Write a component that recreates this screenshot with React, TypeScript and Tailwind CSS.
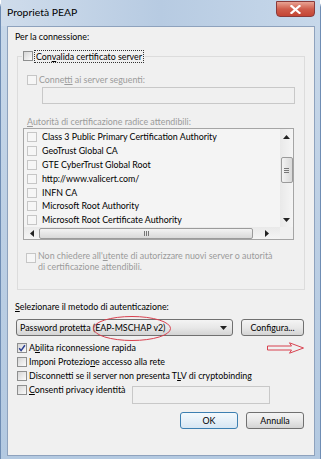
import React from 'react';

const Check = ({ disabled, checked }: { disabled?: boolean; checked?: boolean }) => (
  <span
    className={
      disabled
        ? 'flex h-[10px] w-[10px] shrink-0 items-center justify-center border border-[#c6c6c6] bg-[#f6f6f6]'
        : 'flex h-[10px] w-[10px] shrink-0 items-center justify-center border border-[#8e8f8f] bg-linear-to-br from-[#d6d6d6] to-[#fbfbfb]'
    }
  >
    {checked && (
      <svg width="8" height="8" viewBox="0 0 8 8">
        <path d="M1.2 4.2 L3.1 6.6 L6.9 1.2" fill="none" stroke="#2b3f91" strokeWidth="1.5" />
      </svg>
    )}
  </span>
);

const Tri = ({ dir }: { dir: 'up' | 'down' | 'left' | 'right' }) => {
  const pts = {
    up: '0,4 3.5,0 7,4',
    down: '0,0 7,0 3.5,4',
    left: '4,0 4,7 0,3.5',
    right: '0,0 0,7 4,3.5',
  }[dir];
  const vertical = dir === 'up' || dir === 'down';
  return (
    <svg width={vertical ? 7 : 4} height={vertical ? 4 : 7} viewBox={vertical ? '0 0 7 4' : '0 0 4 7'}>
      <polygon points={pts} fill="#222" />
    </svg>
  );
};

const certs = [
  'Class 3 Public Primary Certification Authority',
  'GeoTrust Global CA',
  'GTE CyberTrust Global Root',
  'http://www.valicert.com/',
  'INFN CA',
  'Microsoft Root Authority',
  'Microsoft Root Certificate Authority',
];

const btn =
  'flex h-[17px] w-[58px] items-center justify-center rounded-[3px] border border-[#707070] bg-linear-to-b from-[#f4f4f4] via-[#e8e8e8] to-[#d4d4d4] text-black';

export default function App() {
  return (
    <div className="h-[459px] w-[321px] bg-white font-['Lato',sans-serif] text-[8.85px] leading-[12px] text-black">
      <div className="flex h-full w-full flex-col rounded-t-[7px] border-x border-[#6f8db4] bg-linear-to-b from-[#c9d9ea] via-[#bccfe4] to-[#b3c9e1]">
        {/* title bar */}
        <div className="flex h-[26px] items-start justify-between bg-linear-to-r from-[#cfdceb] via-[#b7cbe2] to-[#c7d8ea]">
          <span className="pl-[6px] pt-[6px] text-[10.4px] leading-[12px] text-black">Proprietà PEAP</span>
          <div className="mr-[5px] mt-[1px] flex h-[16px] w-[39px] items-center justify-center rounded-b-[4px] border border-[#8a3a3a] bg-linear-to-b from-[#e8a394] via-[#cf5d4c] to-[#c44534]">
            <svg width="11" height="9" viewBox="0 0 11 9">
              <path d="M1.5 1 L9.5 8 M9.5 1 L1.5 8" stroke="#fff" strokeWidth="2.2" strokeLinecap="square" />
            </svg>
          </div>
        </div>

        {/* client area */}
        <div className="relative mb-[3px] ml-[6px] mr-[5px] flex flex-1 flex-col border border-[#8ea2bd] bg-[#f0f0f0] pl-[7px] pt-[4px]">
          <div className="h-[12px]">Per la connessione:</div>

          {/* group box */}
          <div className="relative ml-[2px] mt-[13px] w-[288px] border border-[#dcdcdc] pb-[17px] pl-[9px] pt-[17px]">
            <div className="absolute -top-[8px] left-[4px] flex h-[14px] items-center gap-[1px] bg-[#f0f0f0] pl-[1px] pr-[1px]">
              <Check />
              <span className="border border-dotted border-[#333] px-[1px] leading-[11px]">
                Con<u>v</u>alida certificato server
              </span>
            </div>

            <div className="flex h-[12px] items-center gap-[2px] text-[#9b9b9b]">
              <Check disabled />
              <span>
                Conne<u>t</u>ti ai server seguenti:
              </span>
            </div>
            <div className="ml-[15px] mt-[1px] h-[17px] w-[253px] border border-[#c8c8c8] bg-[#f0f0f0]" />

            <div className="mt-[12px] h-[12px] text-[#9b9b9b]">
              <u>A</u>utorità di certificazione radice attendibili:
            </div>

            {/* list box */}
            <div className="-ml-[4px] grid h-[112px] w-[271px] grid-cols-[1fr_13px] grid-rows-[1fr_12px] border border-[#a5a5a5] bg-[#f4f4f4]">
              <div className="overflow-hidden pl-[3px] pt-[1.5px]">
                {certs.map((c) => (
                  <div key={c} className="flex h-[13.8px] items-center gap-[5px] whitespace-nowrap">
                    <Check disabled />
                    <span>{c}</span>
                  </div>
                ))}
              </div>
              <div className="flex flex-col items-center bg-linear-to-r from-[#e9e9e9] to-[#f5f5f5]">
                <div className="flex h-[16px] items-center">
                  <Tri dir="up" />
                </div>
                <div className="mt-[12px] flex h-[26px] w-[12px] flex-col items-center justify-center gap-[1px] rounded-[2px] border border-[#9b9b9b] bg-linear-to-r from-[#f3f3f3] to-[#d9d9d9]">
                  <span className="h-px w-[5px] bg-[#777]" />
                  <span className="h-px w-[5px] bg-[#777]" />
                  <span className="h-px w-[5px] bg-[#777]" />
                </div>
                <div className="flex-1" />
                <div className="flex h-[15px] items-center">
                  <Tri dir="down" />
                </div>
              </div>
              <div className="flex items-center bg-linear-to-b from-[#e9e9e9] to-[#f5f5f5]">
                <div className="flex w-[15px] justify-center">
                  <Tri dir="left" />
                </div>
                <div className="flex h-[11px] w-[214px] items-center justify-center gap-[1px] rounded-[2px] border border-[#9b9b9b] bg-linear-to-b from-[#f3f3f3] to-[#d9d9d9]">
                  <span className="h-[5px] w-px bg-[#777]" />
                  <span className="h-[5px] w-px bg-[#777]" />
                  <span className="h-[5px] w-px bg-[#777]" />
                </div>
                <div className="flex flex-1 justify-center">
                  <Tri dir="right" />
                </div>
              </div>
              <div className="bg-[#f0f0f0]" />
            </div>

            <div className="-ml-[1px] mt-[10px] flex items-start gap-[2px] text-[#9b9b9b]">
              <span className="mt-[3px]">
                <Check disabled />
              </span>
              <span className="leading-[11px]">
                Non chiedere all'<u>u</u>tente di autorizzare nuovi server o autorità
                <br />
                di certificazione attendibili.
              </span>
            </div>
          </div>

          <div className="mt-[11px] h-[12px]">
            <u>S</u>elezionare il metodo di autenticazione:
          </div>

          <div className="mt-[6px] flex items-center">
            <div className="ml-[1px] flex h-[17px] w-[217px] items-center justify-between rounded-[3px] border border-[#707070] bg-linear-to-b from-[#f4f4f4] via-[#e8e8e8] to-[#d4d4d4] pl-[3px] pr-[5px]">
              <span>Password protetta (EAP-MSCHAP v2)</span>
              <Tri dir="down" />
            </div>
            <div className={`ml-[8px] w-[63px] ${btn}`}>
              Confi<u>g</u>ura...
            </div>
          </div>

          <div className="mt-[5px] flex flex-col pl-[2px]">
            <div className="flex h-[14px] items-center gap-[2px]">
              <Check checked />
              <span>
                A<u>b</u>ilita riconnessione rapida
              </span>
            </div>
            <div className="flex h-[14px] items-center gap-[2px]">
              <Check />
              <span>
                Imponi Protezio<u>n</u>e accesso alla rete
              </span>
            </div>
            <div className="flex h-[14px] items-center gap-[2px]">
              <Check />
              <span>
                Disconnetti se il server non presenta T<u>L</u>V di cryptobinding
              </span>
            </div>
            <div className="flex items-start">
              <div className="flex h-[14px] w-[115px] items-center gap-[2px]">
                <Check />
                <span>
                  <u>C</u>onsenti privacy identità
                </span>
              </div>
              <div className="mt-[3px] h-[18px] w-[138px] border border-[#c8c8c8] bg-[#f0f0f0]" />
            </div>
          </div>

          <div className="mt-[8px] flex justify-end gap-[8px] pr-[10px]">
            <div className="flex h-[17px] w-[58px] items-center justify-center rounded-[3px] border border-[#3c7fb1] bg-linear-to-b from-[#f3f9fd] via-[#e6f0f8] to-[#d6e6f3] text-black">
              OK
            </div>
            <div className={btn}>Annulla</div>
          </div>

          {/* red annotations */}
          <svg className="pointer-events-none absolute left-[84px] top-[288px]" width="80" height="27" viewBox="0 0 80 27">
            <ellipse cx="40" cy="13.5" rx="38.5" ry="12" fill="none" stroke="#d8414f" strokeWidth="1" />
          </svg>
          <svg className="pointer-events-none absolute left-[259px] top-[315px]" width="38" height="12" viewBox="0 0 38 12">
            <polygon
              points="0.5,4 24.5,4 22.5,0.8 36.5,6 22.5,11.2 24.5,8 0.5,8"
              fill="none"
              stroke="#d8414f"
              strokeWidth="1"
            />
          </svg>
        </div>
      </div>
    </div>
  );
}
